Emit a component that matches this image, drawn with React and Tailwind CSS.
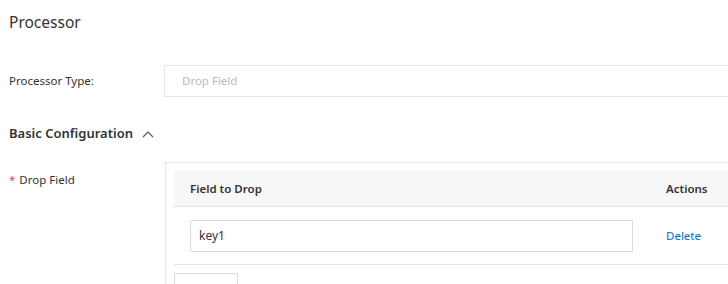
import React from "react";

const FONT = { fontFamily: '"Noto Sans", "Open Sans", sans-serif' };

const ChevronUp = () => (
  <svg width="12" height="8" viewBox="0 0 12 8" className="ml-[9px]">
    <path d="M1 7 L6 2 L11 7" fill="none" stroke="#555" strokeWidth="1.2" />
  </svg>
);

const DropFieldTable = () => (
  <div className="w-[600px] shrink-0 border border-[#e5e5e5] p-[8px] pb-0">
    <div className="flex h-[36px] items-center bg-[#f7f7f7] border-b border-[#e3e3e3] text-[11.5px] font-semibold text-[#333]">
      <div className="w-[476px] shrink-0 pl-[16px]">Field to Drop</div>
      <div className="pl-[16px]">Actions</div>
    </div>
    <div className="flex h-[58px] items-center border-b border-[#e3e3e3]">
      <div className="w-[476px] shrink-0 pl-[16px] pr-[17px]">
        <div className="flex h-[32px] items-center border border-[#dcdcdc] bg-white pl-[8px] text-[12px] text-[#333]">
          key1
        </div>
      </div>
      <div className="pl-[16px] text-[11.5px] text-[#0070cc]">Delete</div>
    </div>
    <div className="pt-[8px]">
      <div className="h-[32px] w-[64px] border border-[#dcdcdc] bg-white" />
    </div>
  </div>
);

export default function App() {
  return (
    <div
      className="w-[728px] h-[284px] overflow-hidden bg-white pl-[9px] text-[#333]"
      style={FONT}
    >
      <div className="pt-[12px] h-[20px] box-content text-[15.5px] leading-[20px]">
        Processor
      </div>

      <div className="mt-[33px] flex items-center">
        <div className="w-[155px] shrink-0 text-[11.5px]">Processor Type:</div>
        <div className="flex h-[32px] w-[600px] shrink-0 items-center border border-[#e5e5e5] pl-[17px] text-[11.5px] text-[#bbb]">
          Drop Field
        </div>
      </div>

      <div className="mt-[27px] flex items-center h-[20px] text-[13px] font-semibold">
        Basic Configuration
        <ChevronUp />
      </div>

      <div className="mt-[18px] flex">
        <div className="w-[156px] shrink-0 pt-[9px] text-[11.5px]">
          <span className="text-[#e54545] mr-[4px]">*</span>
          Drop Field
        </div>
        <DropFieldTable />
      </div>
    </div>
  );
}
